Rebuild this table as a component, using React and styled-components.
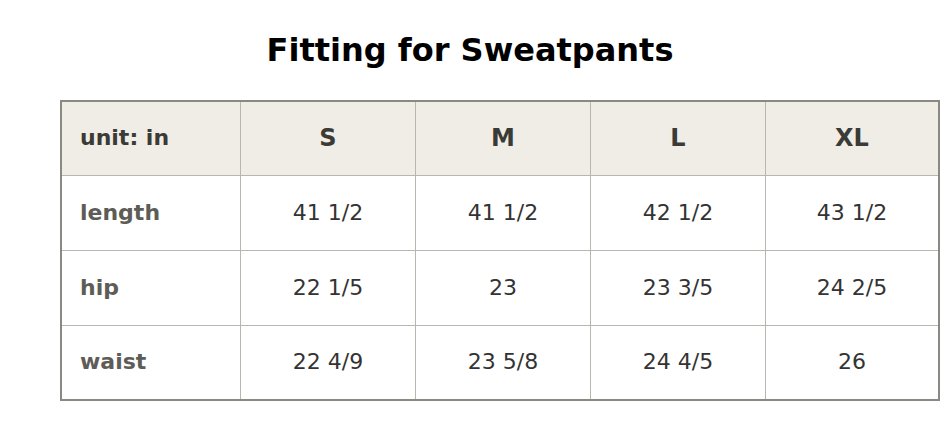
import React from "react";
import styled, { createGlobalStyle } from "styled-components";

const Global = createGlobalStyle`
  html, body { margin: 0; padding: 0; background: #ffffff; }
  body { font-family: "DejaVu Sans", "Liberation Sans", sans-serif; }
`;

const Page = styled.div`
  width: 940px;
  height: 440px;
  overflow: hidden;
  background: #ffffff;
`;

const Title = styled.h1`
  margin: 0;
  height: 100px;
  display: flex;
  align-items: center;
  justify-content: center;
  font-size: 32px;
  font-weight: bold;
  color: #000000;
`;

const Table = styled.div`
  margin-left: 60px;
  width: 880px;
  box-sizing: border-box;
  border: 2px solid #8a8a82;
  display: grid;
  grid-template-columns: 178px 175px 175px 175px 173px;
  grid-template-rows: 73px 75px 75px 74px;
`;

const Cell = styled.div`
  box-sizing: border-box;
  display: flex;
  align-items: center;
  justify-content: ${(p) => (p.$label ? "flex-start" : "center")};
  padding-left: ${(p) => (p.$label ? "18px" : "0")};
  padding-bottom: 2px;
  border-left: ${(p) => (p.$first ? "none" : "1px solid #b8b6ae")};
  border-top: ${(p) => (p.$top ? "none" : "1px solid #b8b6ae")};
  background: ${(p) => (p.$head ? "#f0ede6" : "#ffffff")};
  font-size: ${(p) => (p.$head && !p.$label ? "24px" : "22px")};
  font-weight: ${(p) => (p.$head || p.$label ? "bold" : "normal")};
  color: ${(p) =>
    p.$head ? "#3a3a36" : p.$label ? "#5e5c57" : "#333333"};
  white-space: nowrap;
`;

const sizes = ["S", "M", "L", "XL"];
const rows = [
  ["length", "41 1/2", "41 1/2", "42 1/2", "43 1/2"],
  ["hip", "22 1/5", "23", "23 3/5", "24 2/5"],
  ["waist", "22 4/9", "23 5/8", "24 4/5", "26"],
];

export default function App() {
  return (
    <Page>
      <Global />
      <Title>Fitting for Sweatpants</Title>
      <Table>
        <Cell $head $label $first $top>unit: in</Cell>
        {sizes.map((s) => (
          <Cell key={s} $head $top>{s}</Cell>
        ))}
        {rows.map((r) =>
          r.map((v, i) => (
            <Cell key={r[0] + i} $label={i === 0} $first={i === 0}>
              {v}
            </Cell>
          ))
        )}
      </Table>
    </Page>
  );
}
